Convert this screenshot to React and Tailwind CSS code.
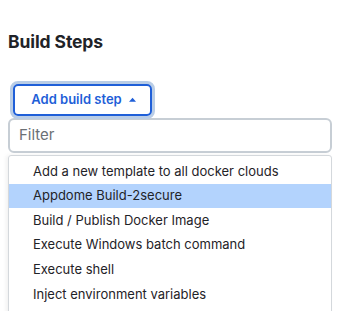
import React from 'react';

const steps = [
  'Add a new template to all docker clouds',
  'Appdome Build-2secure',
  'Build / Publish Docker Image',
  'Execute Windows batch command',
  'Execute shell',
  'Inject environment variables',
];

export default function App() {
  return (
    <div className="w-[340px] h-[311px] overflow-hidden bg-white font-['Inter','Noto_Sans',sans-serif] text-[#1f2328]">
      <div className="pl-2 pt-[31px]">
        <h2 className="text-[17.5px] font-bold leading-[22px] tracking-[-0.1px]">Build Steps</h2>
      </div>

      <div className="pl-[10px] mt-[28px]">
        <div className="inline-flex rounded-[8px] border-[3px] border-[#b9cde6]">
          <button className="flex items-center h-[32px] w-[139px] justify-center gap-[7px] pl-[2px] rounded-[5px] border-2 border-[#1f5fd8] bg-white text-[13px] font-semibold text-[#1f5fd8]">
            Add build step
            <svg width="7" height="5" viewBox="0 0 8 5" className="mt-[-1px]">
              <path d="M0 5 L4 0.5 L8 5 Z" fill="#1f5fd8" />
            </svg>
          </button>
        </div>
      </div>

      <div className="pl-2 pr-2 -mt-[1px]">
        <div className="h-[35px] w-[324px] rounded-[6px] border-2 border-[#c7ced5] flex items-center pl-[9px] text-[15px] text-[#6b7075]">
          Filter
        </div>
        <div className="mt-[2px] w-[324px] h-[200px] border border-[#d4d8dc] shadow-[-2px_0_4px_rgba(0,0,0,0.06)] pt-[3px] rounded-t-[3px]">
          {steps.map((s, i) => (
            <div
              key={s}
              className={`h-[24.6px] flex items-center pl-[24px] text-[13px] text-[#1f2328] ${i === 1 ? 'bg-[#b3d3fd]' : ''}`}
            >
              {s}
            </div>
          ))}
        </div>
      </div>
    </div>
  );
}
